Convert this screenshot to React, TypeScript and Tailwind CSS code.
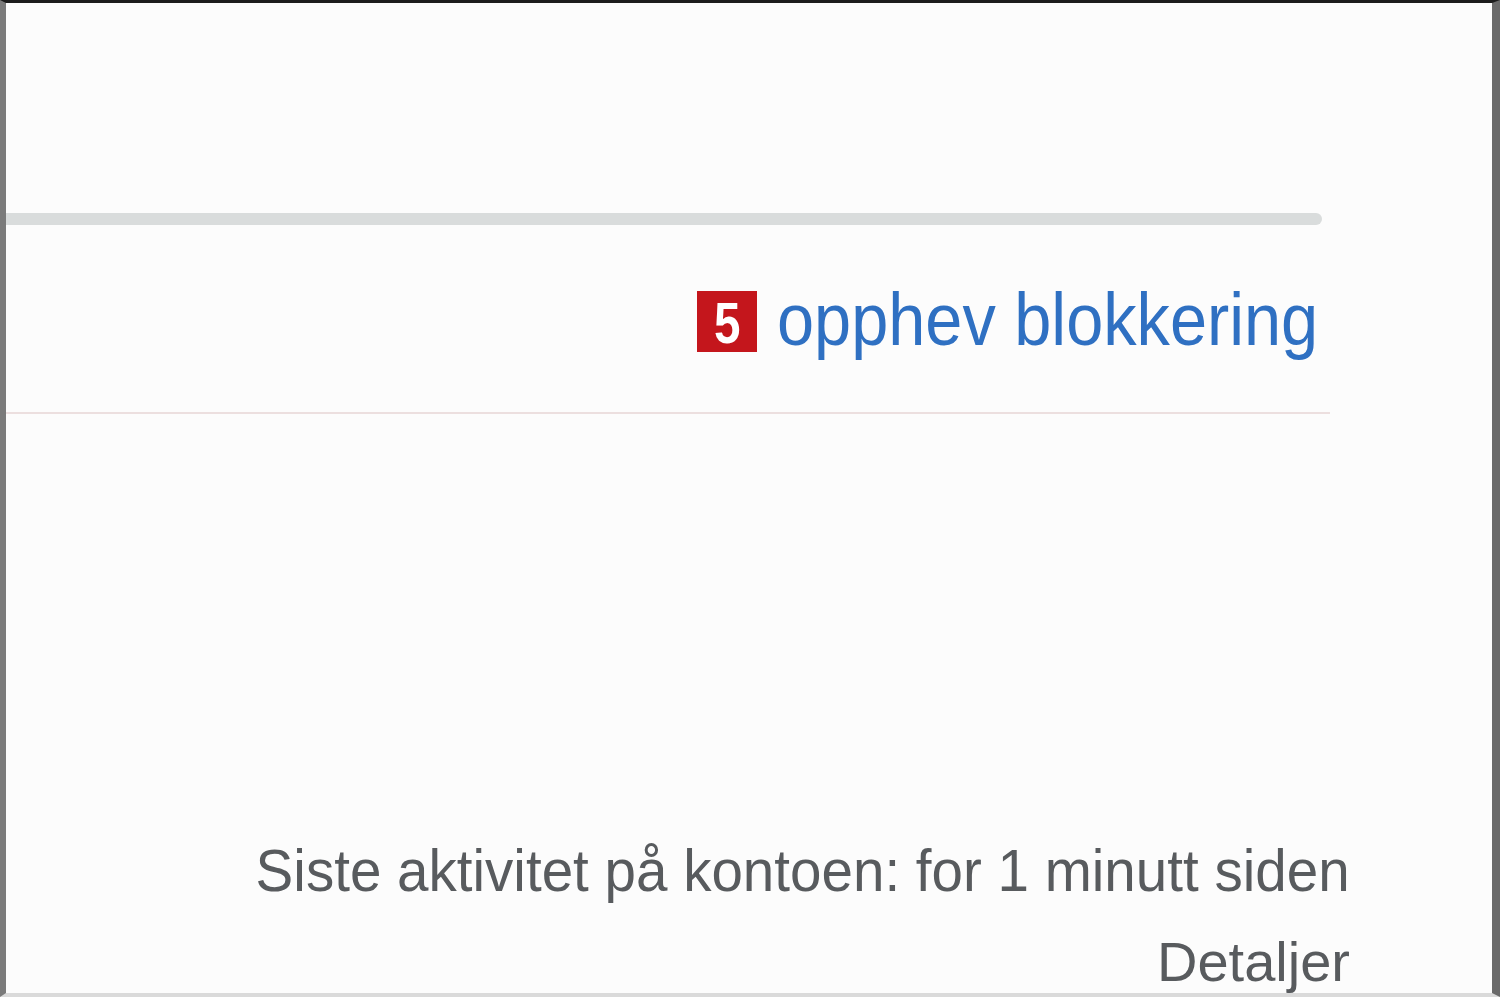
/**
 * Account panel crop — unblock link with numbered marker, plus last activity footer.
 */

const sans = "font-['Liberation_Sans',Arial,sans-serif]";

export default function App() {
  return (
    <div
      className={`h-[997px] w-[1500px] overflow-hidden border-t-[3px] border-r-[8px] border-b-[4px] border-l-[6px] border-t-[#1c1c1c] border-r-[#6a6a6a] border-b-[#dadada] border-l-[#7b7b7b] bg-[#fcfcfc] ${sans}`}
    >
      <div className="mt-[210px] h-[12px] w-[1316px] rounded-r-full bg-[#d9dcdc]" />

      <div className="mt-[66px] flex h-[61px] w-[1316px] items-center justify-end gap-[20px] pr-[4px]">
        <span className="flex h-[61px] w-[60px] items-center justify-center bg-[#c4161c] pt-[2px] text-[58px] font-bold leading-none text-white">
          <span className="block scale-x-[0.82]">5</span>
        </span>
        <a
          href="#"
          className="mb-[4px] block w-[541px] origin-left scale-x-[0.901] whitespace-nowrap text-[74px] leading-[72px] text-[#2f70c2]"
        >
          opphev blokkering
        </a>
      </div>

      <div className="mt-[60px] h-[2px] w-[1324px] bg-[#ecdfdf]" />

      <div className="mt-[427px] flex w-[1344px] flex-col items-end text-[#585b5e]">
        <p className="origin-right scale-x-[0.9426] whitespace-nowrap text-[60px] leading-[60px]">
          Siste aktivitet på kontoen: for 1 minutt siden
        </p>
        <a href="#" className="mt-[33px] block text-[56px] leading-[56px]">
          Detaljer
        </a>
      </div>
    </div>
  );
}
